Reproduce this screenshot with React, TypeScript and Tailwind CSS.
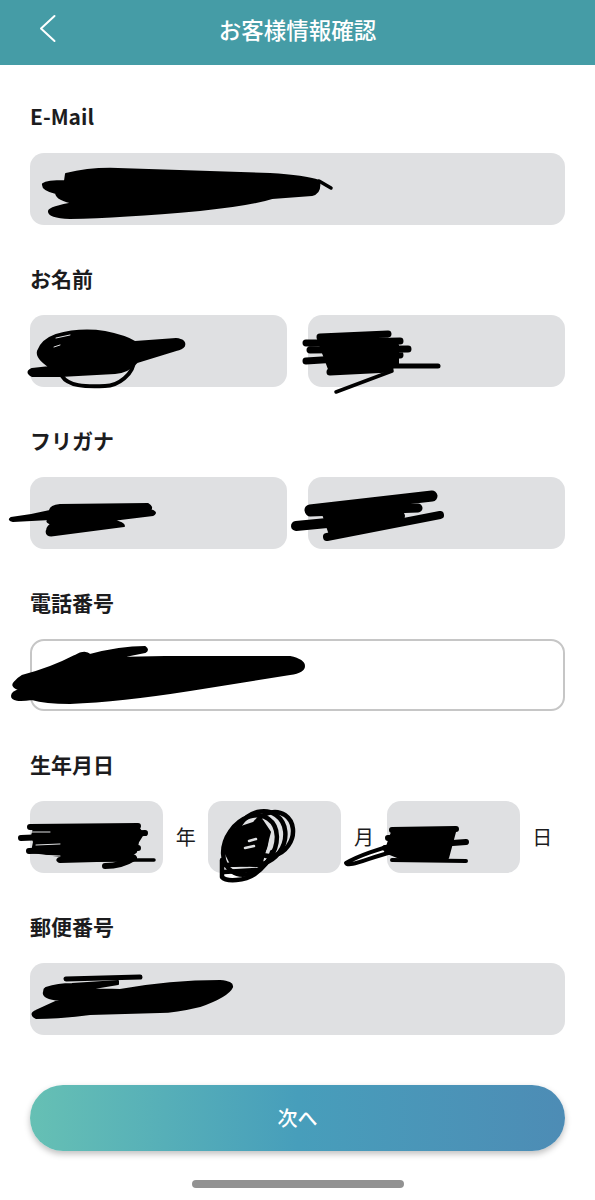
import React from "react";

const fieldClass = "h-[72px] rounded-[14px] bg-[#dfe0e2]";
const labelClass = "h-6 text-[21px] leading-[22px] font-bold text-[#1c1c1e]";

function Section({ label, children }: { label: string; children: React.ReactNode }) {
  return (
    <section className="flex flex-col gap-6">
      <div className={labelClass}>{label}</div>
      {children}
    </section>
  );
}

function TwoFields() {
  return (
    <div className="grid grid-cols-2 gap-[21px]">
      <div className={fieldClass}></div>
      <div className={fieldClass}></div>
    </div>
  );
}

// scribbled-out values, drawn over the form in page coordinates
function Scribbles() {
  return (
    <svg
      className="absolute top-0 left-0 pointer-events-none"
      width="595"
      height="1200"
      viewBox="0 0 595 1200"
      fill="none"
      stroke="#000"
      strokeLinecap="round"
      strokeLinejoin="round"
    >
      {/* email */}
      <path
        fill="#000"
        strokeWidth="2"
        d="M66 174 Q90 168 118 169 L270 174 Q305 176 319 181 Q321 193 312 195 L272 198 Q250 205 200 210 Q120 217 70 218 Q48 217 49 211 Q50 207 75 203 Q57 200 56 193 Q42 190 43 184 Q47 181 65 181Z"
      />
      <path strokeWidth="3.5" d="M319 181 L331 188" />

      {/* name */}
      <path
        fill="#000"
        strokeWidth="2"
        d="M56 335 Q80 328 105 332 Q125 336 135 342 L176 339 Q186 340 184 346 Q182 349 176 350 L137 362 Q128 372 115 373 L60 376 L32 376 Q25 372 32 369 L50 367 Q36 358 38 351 Q42 340 56 335Z"
      />
      <path strokeWidth="4" d="M62 376 C68 386 85 387 105 386 C118 386 134 374 134 360" />
      <path stroke="#dfe0e2" strokeWidth="1" d="M56 338 L70 335 M54 347 L60 345" />
      <path strokeWidth="7" d="M320 337 L388 334 M306 343 L400 341 M310 350 L408 349 M306 361 L400 355 M330 372 L390 369" />
      <path fill="#000" strokeWidth="2" d="M320 345 L398 345 L398 366 L330 372Z" />
      <path strokeWidth="5" d="M390 366 L438 366" />
      <path strokeWidth="3.5" d="M336 392 L392 371" />

      {/* furigana */}
      <path
        fill="#000"
        strokeWidth="2"
        d="M11 518 Q30 516 50 511 Q50 506 60 505 L148 504 Q153 507 150 510 Q158 512 153 515 L112 520 Q124 523 124 526 L55 535 Q45 537 47 530 Q48 526 52 524 Q44 522 50 519 L13 521 Q8 520 11 518Z"
      />
      <path strokeWidth="11" d="M310 510 L432 496" />
      <path strokeWidth="9" d="M310 512 L418 508" />
      <path strokeWidth="10" d="M296 526 L400 516" />
      <path strokeWidth="8" d="M327 537 L440 515" />
      <path fill="#000" strokeWidth="2" d="M320 505 L400 500 L400 525 L330 535Z" />

      {/* phone */}
      <path
        fill="#000"
        strokeWidth="2"
        d="M22 676 Q50 669 75 656 Q85 650 90 655 Q120 647 145 647 Q149 650 145 652 L115 658 L165 657 L290 657 Q304 660 304 666 Q304 672 290 674 L190 690 Q120 701 70 703 Q45 703 32 699 Q12 702 12 696 Q12 692 20 690 Q10 686 15 682 Q17 679 22 676Z"
      />

      {/* birth date */}
      <path fill="#000" strokeWidth="2" d="M34 828 L138 827 L143 834 L138 842 L136 852 L128 858 L60 856 L32 852 L34 842 L32 836Z" />
      <path strokeWidth="6" d="M30 827 L138 826 M21 838 L145 833 M29 851 L138 848 M60 860 L133 858 M105 866 C118 866 128 862 134 858" />
      <path stroke="#dfe0e2" strokeWidth="1" d="M30 832 L50 832 M36 845 L60 844 M36 855 L60 856" />
      <path strokeWidth="3.5" d="M58 860 L154 860" />
      <g strokeWidth="4.5">
        <ellipse cx="250" cy="845" rx="24" ry="32" transform="rotate(35 250 845)" />
        <ellipse cx="260" cy="838" rx="24" ry="28" transform="rotate(35 260 838)" />
        <ellipse cx="272" cy="834" rx="20" ry="23" transform="rotate(35 272 834)" />
        <ellipse cx="250" cy="846" rx="14" ry="20" transform="rotate(35 250 846)" />
        <path d="M222 860 L222 877 C226 882 245 881 255 874 C262 869 270 860 272 852 M222 865 L262 864 M224 872 L256 870" />
      </g>
      <path fill="#000" strokeWidth="2" d="M232 830 L262 820 L270 832 L262 862 L232 866 L224 850Z" />
      <path stroke="#dfe0e2" strokeWidth="2.5" d="M249 841 L256 839 M245 848 L254 846" />
      <path strokeWidth="6" d="M392 830 L456 829 M388 838 L450 836 M385 848 L466 842 M405 858 L440 855" />
      <path fill="#000" strokeWidth="2" d="M392 832 L455 832 L448 858 L405 860 L385 852Z" />
      <path strokeWidth="4" d="M392 860 L466 861" />
      <path strokeWidth="4" d="M400 844 C380 848 358 856 346 863 C348 868 368 858 392 852" />

      {/* postal code */}
      <path strokeWidth="5" d="M66 979 L140 977" />
      <path
        fill="#000"
        strokeWidth="2"
        d="M46 988 Q58 984 72 984 L118 981 L118 984 L88 989 L120 990 Q170 981 220 981 Q233 982 232 987 Q228 996 200 1006 Q175 1012 160 1012 L90 1014 Q60 1018 36 1018 Q29 1014 36 1011 L60 1000 Q42 998 44 992 Q44 989 46 988Z"
      />
    </svg>
  );
}

export default function App() {
  return (
    <div className="relative w-[595px] h-[1200px] overflow-hidden bg-white font-['Noto_Sans_CJK_JP','Noto_Sans',sans-serif]">
      <header className="relative flex h-[65px] items-center justify-center bg-[#459ca6] pb-[7px]">
        <svg className="absolute top-0 left-0" width="70" height="65" viewBox="0 0 70 65" fill="none">
          <path d="M54.5 16 L41 28.5 L54.5 41" stroke="#fff" strokeWidth="2" strokeLinecap="round" strokeLinejoin="round" />
        </svg>
        <h1 className="text-[22.5px] leading-none font-medium text-white">お客様情報確認</h1>
      </header>

      <main className="flex flex-col gap-[42px] px-[30px] pt-10">
        <Section label="E-Mail">
          <div className={fieldClass}></div>
        </Section>
        <Section label="お名前">
          <TwoFields />
        </Section>
        <Section label="フリガナ">
          <TwoFields />
        </Section>
        <Section label="電話番号">
          <div className="h-[72px] rounded-[14px] border-2 border-[#c6c6c6] bg-white"></div>
        </Section>
        <Section label="生年月日">
          <div className="flex h-[72px] items-center">
            <div className={fieldClass + " w-[133px]"}></div>
            <span className="flex-1 text-center text-[20px] text-[#1c1c1e]">年</span>
            <div className={fieldClass + " w-[133px]"}></div>
            <span className="flex-1 text-center text-[20px] text-[#1c1c1e]">月</span>
            <div className={fieldClass + " w-[133px]"}></div>
            <span className="flex-1 text-center text-[20px] text-[#1c1c1e]">日</span>
          </div>
        </Section>
        <Section label="郵便番号">
          <div className={fieldClass}></div>
        </Section>
      </main>

      <div className="mt-[50px] px-[30px]">
        <button className="flex h-[66px] w-full items-center justify-center rounded-full bg-linear-to-r from-[#66c0b4] via-[#479ebb] to-[#4d8cb5] text-[20px] font-medium text-white shadow-[0_3px_6px_rgba(0,0,0,0.25)]">
          次へ
        </button>
      </div>

      <div className="mx-auto mt-[29px] h-2 w-[212px] rounded-full bg-[#929292]"></div>

      <Scribbles />
    </div>
  );
}
